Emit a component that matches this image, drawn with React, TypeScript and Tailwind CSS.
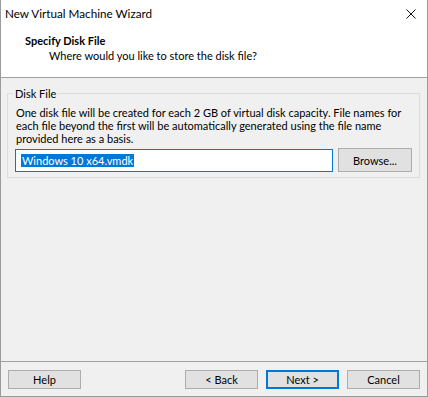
import React from "react";

const WizardButton: React.FC<{
  label: string;
  primary?: boolean;
  tall?: boolean;
}> = ({ label, primary, tall }) => (
  <button
    className={
      (tall ? "w-[74px] h-[24px] " : "w-[73px] h-[19px] ") +
      (primary
        ? "border-2 border-[#0078d7] "
        : "border border-[#adadad] ") +
      "bg-[#e1e1e1] text-[11px] leading-none text-black flex items-center justify-center shrink-0"
    }
  >
    {label}
  </button>
);

const App: React.FC = () => {
  return (
    <div className="w-[428px] h-[397px] flex flex-col bg-[#f0f0f0] border-x border-b border-[#9b9b9b] text-[11px] text-black font-[Lato,sans-serif]">
      {/* Title bar */}
      <div className="h-[30px] bg-white flex items-start justify-between pl-[4px] pr-[11px] pt-[6px]">
        <span className="text-[11.7px] leading-[15px]">New Virtual Machine Wizard</span>
        <svg width="10" height="10" viewBox="0 0 10 10" className="mt-[3px]">
          <path d="M0.5 0.5 L9.5 9.5 M9.5 0.5 L0.5 9.5" stroke="#111" strokeWidth="1" />
        </svg>
      </div>

      {/* Header */}
      <div className="h-[48px] bg-white border-b border-[#a0a0a0] pl-[24px] pt-[3px]">
        <div className="font-bold leading-[15px]">Specify Disk File</div>
        <div className="pl-[24px] leading-[15px]">
          Where would you like to store the disk file?
        </div>
      </div>

      {/* Body */}
      <div className="flex-1 pl-[6px] pr-[7px] pt-[9px]">
        <fieldset className="border border-[#dcdcdc] px-[7px] pb-[5px]">
          <legend className="px-[2px] ml-[-2px] leading-[13px]">Disk File</legend>
          <div className="leading-[13px] mt-[6px] pl-[1px] whitespace-nowrap">
            <div>One disk file will be created for each 2 GB of virtual disk capacity. File names for</div>
            <div>each file beyond the first will be automatically generated using the file name</div>
            <div>provided here as a basis.</div>
          </div>
          <div className="flex items-center gap-[5px] mt-[3px]">
            <div className="w-[318px] h-[23px] bg-white border border-[#0078d7] flex items-center pl-[5px]">
              <span className="bg-[#0078d7] text-white leading-[13px] px-[1px]">
                Windows 10 x64.vmdk
              </span>
            </div>
            <WizardButton label="Browse..." tall />
          </div>
        </fieldset>
      </div>

      {/* Footer */}
      <div className="h-[35px] border-t border-[#a0a0a0] flex items-start pt-[8px] px-[7px]">
        <WizardButton label="Help" />
        <div className="flex-1" />
        <div className="flex gap-[8px]">
          <WizardButton label="< Back" />
          <WizardButton label="Next >" primary />
          <WizardButton label="Cancel" />
        </div>
      </div>
    </div>
  );
};

export default App;
